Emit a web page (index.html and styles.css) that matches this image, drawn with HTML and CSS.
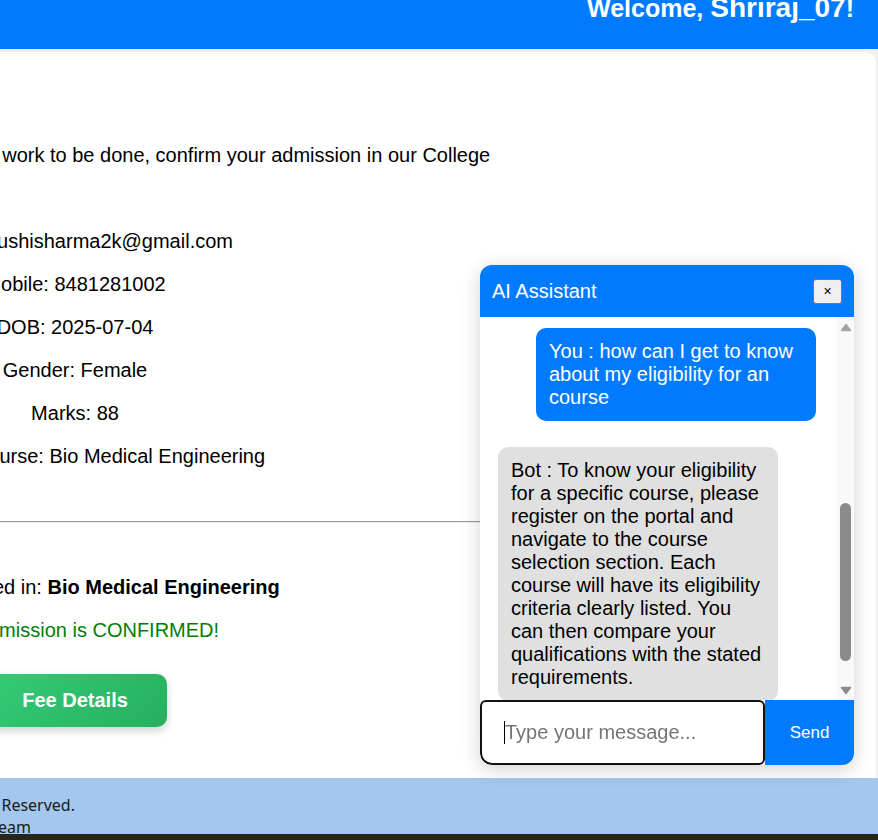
FILE: index.html
```html
<!DOCTYPE html>
<html lang="en">
<head>
<meta charset="utf-8">
<title>Student Dashboard</title>
<link rel="stylesheet" href="styles.css">
</head>
<body>
<header class="topbar">
  <div class="welcome">Welcome, <span class="username">Shriraj_07</span>!</div>
</header>

<main class="card">
  <section class="profile">
    <p class="line intro">Congratulations!! Now, only your main work to be done, confirm your admission in our College</p>
    <p class="line email">Mail ID: rushisharma2k@gmail.com</p>
    <p class="line">Mobile: 8481281002</p>
    <p class="line">DOB: 2025-07-04</p>
    <p class="line">Gender: Female</p>
    <p class="line">Marks: 88</p>
    <p class="line">Preferred Course: Bio Medical Engineering</p>
    <hr class="divider">
    <p class="line enrolled">You are enrolled in: <strong>Bio Medical Engineering</strong></p>
    <p class="line confirmed">Your admission is CONFIRMED!</p>
    <button class="fee-btn" type="button">Fee Details</button>
  </section>
</main>

<footer class="footer">
  <div class="foot-line first"><span>&copy; 2025 College Admission Portal. All Rights Reserved.</span></div>
  <div class="foot-line second"><span>Designed &amp; Developed by Shriraj Team</span></div>
</footer>
<div class="taskbar"></div>

<aside class="chat">
  <div class="chat-head">
    <span class="chat-title">AI Assistant</span>
    <button class="close-btn" type="button">&times;</button>
  </div>
  <div class="chat-body">
    <div class="msg-list">
      <div class="bubble user">You : how can I get to know about my eligibility for an course</div>
      <div class="bubble bot">Bot : To know your eligibility for a specific course, please register on the portal and navigate to the course selection section. Each course will have its eligibility criteria clearly listed. You can then compare your qualifications with the stated requirements.</div>
    </div>
    <div class="scrollbar">
      <div class="sb-btn">
        <svg width="12" height="9" viewBox="0 0 12 9"><polygon points="6,1.5 10.5,7.5 1.5,7.5" fill="#a3a3a3" stroke="#a3a3a3" stroke-width="1.5" stroke-linejoin="round"/></svg>
      </div>
      <div class="sb-track"><div class="sb-thumb"></div></div>
      <div class="sb-btn">
        <svg width="12" height="9" viewBox="0 0 12 9"><polygon points="1.5,1.5 10.5,1.5 6,7.5" fill="#8c8c8c" stroke="#8c8c8c" stroke-width="1.5" stroke-linejoin="round"/></svg>
      </div>
    </div>
  </div>
  <div class="chat-input">
    <div class="input-wrap">
      <input class="msg-input" type="text" placeholder="Type your message...">
      <span class="caret"></span>
    </div>
    <button class="send-btn" type="button">Send</button>
  </div>
</aside>
</body>
</html>
```
FILE: styles.css
```css
* { box-sizing: border-box; }

html, body {
  margin: 0;
  height: 840px;
  overflow: hidden;
}

body {
  background: #f0f0f0;
  font-family: "Liberation Sans", Arial, sans-serif;
  color: #000;
}

/* top bar */
.topbar {
  height: 49px;
  background: #007bff;
  color: #fff;
  display: flex;
  justify-content: flex-end;
  align-items: flex-start;
  padding-right: 24px;
}

.welcome {
  font-size: 25px;
  font-weight: 700;
  line-height: 16px;
  white-space: nowrap;
}

.username { font-size: 1.12em; }

/* main card */
.card {
  margin: 3px 2px 0 0;
  background: #fff;
  border-top-right-radius: 10px;
  padding: 92px 0 51px;
}

.profile {
  width: 150px;
  display: flex;
  flex-direction: column;
  align-items: center;
}

.line {
  margin: 20px 0 0;
  font-size: 20px;
  line-height: 23px;
  white-space: nowrap;
  flex: none;
}

.intro { margin-top: 0; }
.email { margin-top: 63px; }

.divider {
  flex: none;
  width: 1000px;
  height: 0;
  margin: 53px 0 0;
  border: 0;
  border-top: 1px solid #9a9a9a;
  border-bottom: 1px solid #ececec;
}

.enrolled { margin-top: 53px; }
.confirmed { color: #008000; }

.fee-btn {
  flex: none;
  margin-top: 32px;
  padding: 15px 39px;
  border: 0;
  border-radius: 10px;
  background: linear-gradient(135deg, #33cd75, #27ae60);
  color: #fff;
  font-family: "Liberation Sans", Arial, sans-serif;
  font-size: 20px;
  font-weight: 700;
  line-height: 23px;
  white-space: nowrap;
  box-shadow: 0 4px 10px rgba(0, 0, 0, 0.18);
}

/* footer */
.footer {
  height: 56px;
  background: #a3c7ee;
  padding-top: 16px;
  font-family: "Noto Sans", "Open Sans", sans-serif;
  font-size: 16px;
  line-height: 22px;
  color: #1a1a1a;
  overflow: hidden;
}

.foot-line {
  display: flex;
  justify-content: flex-end;
  white-space: nowrap;
}

.foot-line span { flex: none; }
.foot-line.first { width: 75px; }
.foot-line.second { width: 31px; }

.taskbar {
  height: 6px;
  background: #262619;
}

/* chat widget */
.chat {
  position: fixed;
  right: 24px;
  bottom: 75px;
  width: 374px;
  height: 500px;
  background: #fff;
  border-radius: 12px;
  overflow: hidden;
  box-shadow: 0 4px 20px rgba(0, 0, 0, 0.18);
  display: flex;
  flex-direction: column;
}

.chat-head {
  height: 52px;
  flex: none;
  background: #007bff;
  color: #fff;
  display: flex;
  align-items: center;
  justify-content: space-between;
  padding: 0 12px;
  font-size: 20px;
}

.close-btn {
  width: 29px;
  height: 25px;
  padding: 0;
  background: #efefef;
  border: 1px solid #767676;
  border-radius: 3px;
  color: #000;
  font-family: Arial, "Liberation Sans", sans-serif;
  font-size: 14px;
  line-height: 1;
  display: flex;
  align-items: center;
  justify-content: center;
}

.chat-body {
  flex: 1;
  min-height: 0;
  display: flex;
}

.msg-list {
  flex: 1;
  overflow: hidden;
  padding: 11px 21px 0 18px;
  display: flex;
  flex-direction: column;
  gap: 26px;
}

.bubble {
  flex: none;
  max-width: 280px;
  padding: 12px 13px;
  border-radius: 10px;
  font-size: 20px;
  line-height: 23px;
}

.bubble.user {
  align-self: flex-end;
  background: #007bff;
  color: #fff;
}

.bubble.bot {
  align-self: flex-start;
  background: #e0e0e0;
  color: #000;
}

.scrollbar {
  width: 17px;
  flex: none;
  background: #f9f9f9;
  display: flex;
  flex-direction: column;
}

.sb-btn {
  height: 20px;
  flex: none;
  display: flex;
  align-items: center;
  justify-content: center;
}

.sb-btn svg { display: block; }

.sb-track {
  flex: 1;
  display: flex;
  flex-direction: column;
  align-items: center;
}

.sb-thumb {
  width: 11px;
  height: 158px;
  margin-top: 166px;
  background: #8b8b8b;
  border-radius: 6px;
}

.chat-input {
  height: 65px;
  flex: none;
  display: flex;
}

.input-wrap {
  position: relative;
  width: 285px;
  flex: none;
}

.msg-input {
  width: 100%;
  height: 100%;
  border: 2px solid #111;
  border-radius: 6px 6px 6px 12px;
  padding: 0 0 0 23px;
  font-family: "Liberation Sans", Arial, sans-serif;
  font-size: 20px;
  color: #000;
  background: #fff;
  outline: none;
}

.msg-input::placeholder { color: #757575; }

.caret {
  position: absolute;
  left: 24px;
  top: 21px;
  width: 1px;
  height: 23px;
  background: #000;
}

.send-btn {
  flex: 1;
  border: 0;
  padding: 0;
  background: #007bff;
  color: #fff;
  font-family: "Liberation Sans", Arial, sans-serif;
  font-size: 17px;
}
```
